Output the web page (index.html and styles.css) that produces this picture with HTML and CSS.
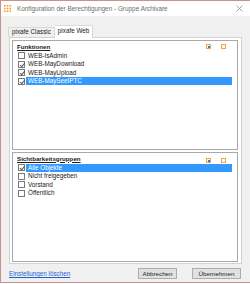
FILE: index.html
```html
<!DOCTYPE html>
<html lang="de">
<head>
    <meta charset="UTF-8">
    <title>Konfiguration der Berechtigungen</title>
    <link rel="stylesheet" href="styles.css">
</head>
<body>
<div class="window">
    <div class="titlebar">
        <svg class="app-icon" width="7" height="7" viewBox="0 0 7 7">
            <rect x="0" y="0" width="1.6" height="1.6" fill="#f0a030"/>
            <rect x="2.7" y="0" width="1.6" height="1.6" fill="#f0a030"/>
            <rect x="5.4" y="0" width="1.6" height="1.6" fill="#f0a030"/>
            <rect x="0" y="2.7" width="1.6" height="1.6" fill="#f0a030"/>
            <rect x="2.7" y="2.7" width="1.6" height="1.6" fill="#f0a030"/>
            <rect x="5.4" y="2.7" width="1.6" height="1.6" fill="#f0a030"/>
            <rect x="0" y="5.4" width="1.6" height="1.6" fill="#f0a030"/>
            <rect x="2.7" y="5.4" width="1.6" height="1.6" fill="#f0a030"/>
            <rect x="5.4" y="5.4" width="1.6" height="1.6" fill="#f0a030"/>
        </svg>
        <span class="title">Konfiguration der Berechtigungen - Gruppe Archivare</span>
        <svg class="close" width="7" height="7" viewBox="0 0 7 7">
            <path d="M0.5 0.5 L6.5 6.5 M6.5 0.5 L0.5 6.5" stroke="#8a8a8a" stroke-width="0.8"/>
        </svg>
    </div>

    <div class="content">
        <div class="tabs">
            <div class="tab">pixafe Classic</div>
            <div class="tab active">pixafe Web</div>
        </div>
        <div class="panel">
            <div class="group">
                <div class="group-head">
                    <span class="group-label">Funktionen</span>
                    <span class="mini on"></span>
                    <span class="mini"></span>
                </div>
                <ul class="list">
                    <li><span class="cb"></span><span class="item">WEB-IsAdmin</span></li>
                    <li><span class="cb checked"></span><span class="item">WEB-MayDownload</span></li>
                    <li><span class="cb checked"></span><span class="item">WEB-MayUpload</span></li>
                    <li><span class="cb checked"></span><span class="item selected">WEB-MaySeeIPTC</span></li>
                </ul>
            </div>
            <div class="group">
                <div class="group-head">
                    <span class="group-label">Sichtbarkeitsgruppen</span>
                    <span class="mini on low"></span>
                    <span class="mini low"></span>
                </div>
                <ul class="list">
                    <li><span class="cb checked"></span><span class="item selected">Alle Objekte</span></li>
                    <li><span class="cb"></span><span class="item">Nicht freigegeben</span></li>
                    <li><span class="cb"></span><span class="item">Vorstand</span></li>
                    <li><span class="cb"></span><span class="item">Öffentlich</span></li>
                </ul>
            </div>
        </div>

        <div class="footer">
            <a class="link" href="#">Einstellungen löschen</a>
            <button class="btn btn-cancel">Abbrechen</button>
            <button class="btn btn-ok">Übernehmen</button>
        </div>
    </div>
    <div class="grip"></div>
</div>
</body>
</html>
```

FILE: styles.css
```css
* {
    margin: 0;
    padding: 0;
    box-sizing: border-box;
}
ul {
    list-style: none;
}
body {
    width: 250px;
    height: 284px;
    background: #ffffff;
    font-family: "Liberation Sans", Arial, sans-serif;
    font-size: 6.3px;
    color: #1a1a1a;
    overflow: hidden;
}
.window {
    position: relative;
    width: 250px;
    height: 283px;
    background: #f0f0f0;
    border-left: 1px solid #c99190;
    border-top: 1px solid #c99190;
    border-bottom: 1px solid #c99190;
    display: flex;
    flex-direction: column;
}
.titlebar {
    height: 15px;
    background: #ffffff;
    display: flex;
    align-items: center;
    padding-left: 3px;
}
.app-icon {
    margin-right: 6px;
}
.title {
    flex: 1;
    color: #6d6d6d;
    font-size: 6.4px;
}
.close {
    margin-right: 7px;
}
.content {
    flex: 1;
    display: flex;
    flex-direction: column;
    padding: 8px 8px 0 7px;
}
/* Reiter */
.tabs {
    display: flex;
    align-items: flex-end;
    height: 13px;
    padding-left: 0;
}
.tab {
    height: 10px;
    padding: 0 3px;
    border: 1px solid #d9d9d9;
    border-bottom: none;
    background: #f0f0f0;
    line-height: 8px;
}
.tab.active {
    height: 13px;
    background: #ffffff;
    border-color: #d9d9d9;
    border-left: none;
    padding: 0 3px 0 3px;
    line-height: 9px;
    margin-bottom: -1px;
    position: relative;
}
.panel {
    margin-left: 1px;
    width: 233px;
    background: #ffffff;
    border: 1px solid #d2d2d2;
    padding: 2px 3px 1px 2px;
    display: flex;
    flex-direction: column;
    gap: 2px;
}
.group {
    height: 110px;
    border: 1px solid #a9a9a9;
    padding: 1px 5px 0 5px;
}
.group-head {
    display: flex;
    align-items: center;
    height: 8px;
    margin-bottom: 1.5px;
}
.group-label {
    flex: 1;
    font-weight: bold;
    text-decoration: underline;
    color: #202020;
    font-size: 6.2px;
    margin-left: -1px;
}
.mini {
    width: 5px;
    height: 5px;
    border: 1px solid #f2a44a;
    background: #fff8ec;
    margin-right: 10px;
    position: relative;
    top: 0.5px;
}
.mini.on::after {
    content: "";
    position: absolute;
    left: 1px;
    top: 1px;
    width: 2px;
    height: 2px;
    background: #3a78d0;
}
.mini.low {
    top: 2px;
}
.mini:last-child {
    margin-right: 6px;
}
.list li {
    display: flex;
    align-items: center;
    height: 8.5px;
}
.cb {
    width: 7px;
    height: 7px;
    border: 1px solid #7a7a7a;
    background: #ffffff;
    margin-right: 1px;
    position: relative;
}
.cb.checked::after {
    content: "";
    position: absolute;
    left: 1.5px;
    top: 0;
    width: 2px;
    height: 3.5px;
    border-right: 1px solid #555555;
    border-bottom: 1px solid #555555;
    transform: rotate(40deg);
}
.item {
    flex: 1;
    height: 8px;
    line-height: 8px;
    padding-left: 2px;
}
.item.selected {
    background: #3399ff;
    color: #ffffff;
}
/* Fuss */
.footer {
    flex: 1;
    display: flex;
    align-items: center;
    padding-top: 1px;
}
.link {
    flex: 1;
    color: #1f5fd6;
    text-decoration: underline;
    margin-left: 1px;
}
.btn {
    height: 11px;
    font-family: "Liberation Sans", Arial, sans-serif;
    font-size: 6.2px;
    color: #1a1a1a;
    background: #e1e1e1;
    border: 1px solid #adadad;
}
.btn-cancel {
    width: 39px;
    margin-right: 15px;
}
.btn-ok {
    width: 49px;
    margin-right: 1px;
}
.grip {
    position: absolute;
    right: 1px;
    bottom: 1px;
    width: 4px;
    height: 4px;
    background: radial-gradient(circle, #b5b5b5 0.5px, transparent 0.6px) 0 0 / 2px 2px;
}
```
